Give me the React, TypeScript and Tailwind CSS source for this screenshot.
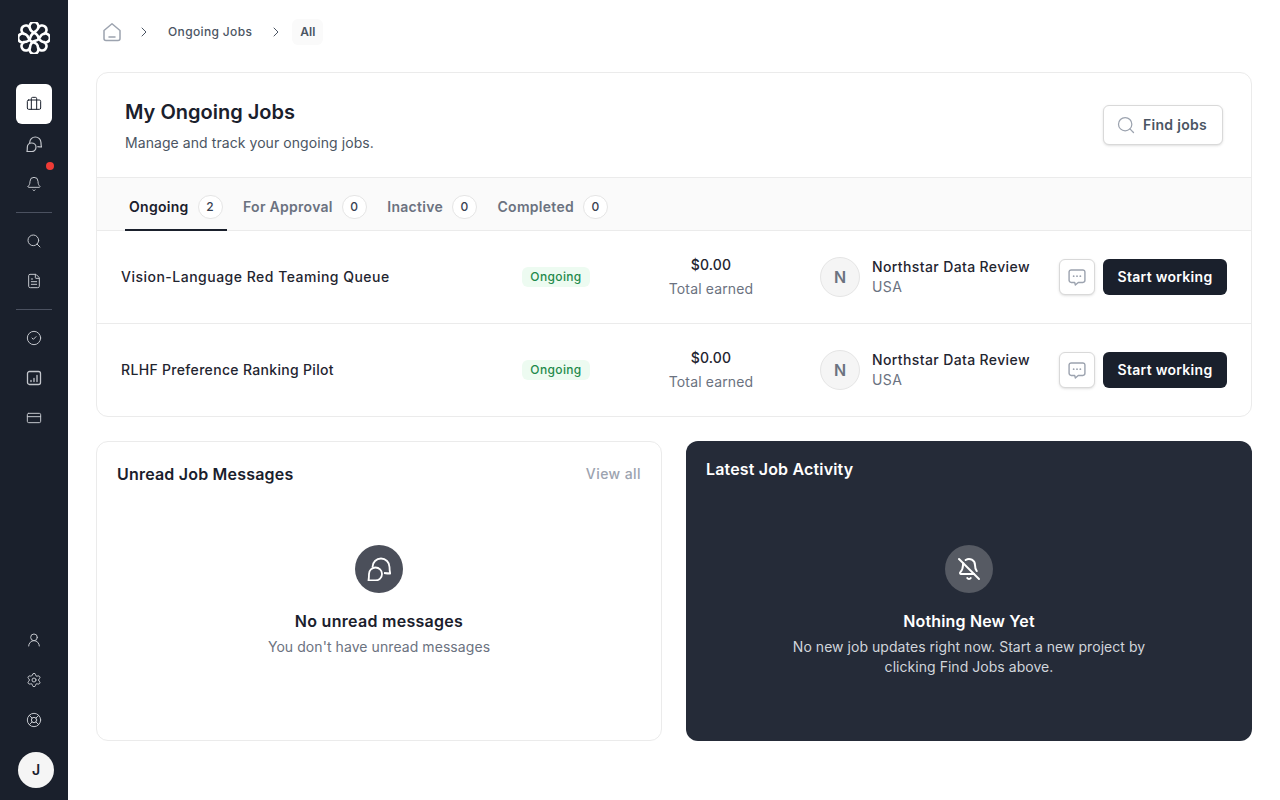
import {
  Bell,
  BellOff,
  Briefcase,
  ChevronRight,
  CircleCheck,
  CreditCard,
  FileText,
  LifeBuoy,
  Search,
  Settings,
  UserRound,
} from "lucide-react";

const tabs = [
  { label: "Ongoing", count: 2, active: true },
  { label: "For Approval", count: 0 },
  { label: "Inactive", count: 0 },
  { label: "Completed", count: 0 },
];

function Logo() {
  return (
    <svg width="32" height="32" viewBox="0 0 32 32" fill="none" stroke="white" strokeWidth="2.6" strokeLinecap="round">
      <path d="M20 6.300A4.400 4.400 0 1 1 25.700 12A4.400 4.400 0 1 1 25.700 20A4.400 4.400 0 1 1 20 25.700A4.400 4.400 0 1 1 12 25.700A4.400 4.400 0 1 1 6.300 20A4.400 4.400 0 1 1 6.300 12A4.400 4.400 0 1 1 12 6.300A4.400 4.400 0 1 1 20 6.300Z" />
      <path d="M12 6.300C12 11 19 10 20 14.500C21 19 25 20 25.700 20" />
      <path d="M6.300 12C11 12 10 19 14.500 20C19 21 20 24 20 25.700" />
      <path d="M20 6.300C20 9 13 11 12.500 15C12 18 9 20 6.300 20" />
      <path d="M25.700 12C22 12 22 18 18 18.500C14 19 12 23 12 25.700" />
    </svg>
  );
}

function ChatBubbles({ size = 16, className = "" }: { size?: number; className?: string }) {
  return (
    <svg width={size} height={size} viewBox="0 0 24 24" fill="none" stroke="currentColor" strokeWidth="1.8" strokeLinejoin="round" className={className}>
      <path d="M5.500 10.500V10A8.500 8.500 0 0 1 14 1.500a8.500 8.500 0 0 1 8.500 8.500c0 2.400.2 4.500.8 6.500c-2 0-4-.2-6.300-.5" />
      <path d="M8.500 10.500a6.500 6.500 0 1 1 0 13H1.500c.4-2.200.5-4.400.5-6.500a6.500 6.500 0 0 1 6.500-6.500z" />
    </svg>
  );
}

function ChatDots() {
  return (
    <svg width="20" height="20" viewBox="0 0 24 24" fill="none" stroke="#9ca3af" strokeWidth="1.7" strokeLinejoin="round" strokeLinecap="round">
      <path d="M5 3.500h14a2.500 2.500 0 0 1 2.500 2.500v10a2.500 2.500 0 0 1-2.500 2.500h-5.500L10 21.500l-.8-3H5A2.500 2.500 0 0 1 2.500 16V6A2.500 2.500 0 0 1 5 3.500z" />
      <path d="M8 11h.01M12 11h.01M16 11h.01" strokeWidth="2.200" />
    </svg>
  );
}

function ChartSquare() {
  return (
    <svg width="16" height="16" viewBox="0 0 16 16" fill="none" stroke="currentColor" strokeWidth="1.3" strokeLinecap="round">
      <rect x="1.500" y="1.500" width="13" height="13" rx="2" />
      <path d="M5 11.500v-1M8 11.500v-3M11 11.500v-6" />
    </svg>
  );
}

function HomeIcon() {
  return (
    <svg width="20" height="20" viewBox="0 0 20 20" fill="none" stroke="#9ca3af" strokeWidth="1.5" strokeLinejoin="round" strokeLinecap="round">
      <path d="M2 8.500 10 1.800l8 6.700v8a2 2 0 0 1-2 2H4a2 2 0 0 1-2-2z" />
      <path d="M7 15h6" />
    </svg>
  );
}

function NavItem({ children }: { children: React.ReactNode }) {
  return <div className="flex h-10 w-9 items-center justify-center text-[#c3c6cc]">{children}</div>;
}

function Sidebar() {
  return (
    <aside className="flex h-[800px] w-[68px] shrink-0 flex-col items-center bg-[#1a202c]">
      <div className="mt-[22px]">
        <Logo />
      </div>
      <div className="mt-[30px] flex h-10 w-9 items-center justify-center rounded-md bg-white text-[#1a202c]">
        <Briefcase size={16} strokeWidth={1.5} />
      </div>
      <NavItem>
        <ChatBubbles />
      </NavItem>
      <div className="relative">
        <NavItem>
          <Bell size={16} strokeWidth={1.5} />
        </NavItem>
        <span className="absolute right-[-2px] top-[-2px] h-2 w-2 rounded-full bg-[#ef3b36]" />
      </div>
      <div className="mb-2 mt-2 h-px w-9 bg-[#4b5160]" />
      <NavItem>
        <Search size={16} strokeWidth={1.5} />
      </NavItem>
      <NavItem>
        <FileText size={16} strokeWidth={1.5} />
      </NavItem>
      <div className="mb-2 mt-2 h-px w-9 bg-[#4b5160]" />
      <NavItem>
        <CircleCheck size={16} strokeWidth={1.5} />
      </NavItem>
      <NavItem>
        <ChartSquare />
      </NavItem>
      <NavItem>
        <CreditCard size={16} strokeWidth={1.5} />
      </NavItem>
      <div className="flex-1" />
      <NavItem>
        <UserRound size={16} strokeWidth={1.5} />
      </NavItem>
      <NavItem>
        <Settings size={16} strokeWidth={1.5} />
      </NavItem>
      <NavItem>
        <LifeBuoy size={16} strokeWidth={1.5} />
      </NavItem>
      <div className="mb-3 ml-1 mt-3 flex h-9 w-9 items-center justify-center rounded-full bg-[#f5f5f5] text-sm font-semibold text-[#1a202c]">
        J
      </div>
    </aside>
  );
}

function JobRow({ title, titleClass, last }: { title: string; titleClass: string; last?: boolean }) {
  return (
    <div className={`flex items-center pl-6 pr-6 ${last ? "h-[92px]" : "h-[93px] border-b border-[#ebebeb]"}`}>
      <div className={`w-[401px] text-sm font-medium text-[#1f2530] ${titleClass}`}>{title}</div>
      <div className="w-[68px]">
        <span className="flex h-5 w-[68px] items-center justify-center rounded-md bg-[#edfbf1] text-xs font-medium tracking-[0.03em] text-[#1f8a4c]">
          Ongoing
        </span>
      </div>
      <div className="ml-[61px] w-[120px] text-center text-sm tracking-[0.01em]">
        <div className="font-medium leading-5 text-[#1f2530]">$0.00</div>
        <div className="mt-1 leading-5 text-[#6b7280]">Total earned</div>
      </div>
      <div className="ml-[49px] flex h-10 w-10 items-center justify-center rounded-full border border-[#e5e5e5] bg-[#f5f5f5] font-semibold text-[#6b7280]">
        N
      </div>
      <div className="ml-3 w-[187px] text-sm tracking-[0.027em]">
        <div className="font-medium leading-5 text-[#1f2530]">Northstar Data Review</div>
        <div className="leading-5 text-[#6b7280]">USA</div>
      </div>
      <button className="flex h-9 w-9 items-center justify-center rounded-md border border-[#d9d9d9] bg-white shadow-sm">
        <ChatDots />
      </button>
      <button className="ml-2 h-9 w-[124px] rounded-md bg-[#1a202c] text-sm font-semibold tracking-[0.02em] text-white">
        Start working
      </button>
    </div>
  );
}

export default function App() {
  return (
    <div className="flex h-[800px] overflow-hidden bg-white font-['Inter',sans-serif]">
      <Sidebar />
      <main className="flex-1 px-7">
        <nav className="flex h-[72px] items-center pb-[8px] pl-[6px] text-xs text-[#4b5563]">
          <HomeIcon />
          <ChevronRight size={16} strokeWidth={1.5} className="ml-[14px] text-[#4b5563]" />
          <span className="ml-[16px] font-medium tracking-[0.03em]">Ongoing Jobs</span>
          <ChevronRight size={16} strokeWidth={1.5} className="ml-[16px] text-[#4b5563]" />
          <span className="ml-[8px] flex h-[26px] items-center rounded-md bg-[#fafafa] px-2 font-semibold">All</span>
        </nav>

        <section className="overflow-hidden rounded-xl border border-[#ebebeb]">
          <div className="flex h-[104px] items-center justify-between pl-7 pr-7">
            <div className="pt-px">
              <h1 className="text-xl font-semibold leading-7 text-[#1a202c]">My Ongoing Jobs</h1>
              <p className="mt-[7px] text-sm leading-5 tracking-[0.005em] text-[#4b5563]">Manage and track your ongoing jobs.</p>
            </div>
            <button className="flex h-10 w-[120px] items-center justify-center gap-[7px] rounded-md border border-[#d9d9d9] bg-white pr-[3px] text-sm font-semibold tracking-[0.02em] text-[#4b5563] shadow-sm">
              <Search size={20} strokeWidth={1.5} className="text-[#9ca3af]" />
              Find jobs
            </button>
          </div>
          <div className="flex h-[54px] items-stretch gap-[12.5px] border-y border-[#ebebeb] bg-[#fafafa] pl-7 pt-[6px]">
            {tabs.map((t) => (
              <div
                key={t.label}
                className={`flex items-center gap-[9px] px-1 text-sm font-semibold tracking-[0.02em] ${
                  t.active ? "-mb-px border-b-2 border-[#1a202c] text-[#1a202c]" : "text-[#6b7280]"
                }`}
              >
                {t.label}
                <span className="flex h-6 w-[25px] items-center justify-center rounded-full border border-[#e5e5e5] bg-white text-xs font-medium text-[#374151]">
                  {t.count}
                </span>
              </div>
            ))}
          </div>
          <JobRow title="Vision-Language Red Teaming Queue" titleClass="tracking-[0.035em]" />
          <JobRow title="RLHF Preference Ranking Pilot" titleClass="tracking-[0.023em]" last />
        </section>

        <div className="mt-6 grid grid-cols-2 gap-6">
          <section className="h-[300px] rounded-xl border border-[#ebebeb] bg-white px-5">
            <div className="flex items-center justify-between pt-[22px]">
              <h2 className="text-base font-semibold leading-5 tracking-[0.0125em] text-[#1a202c]">Unread Job Messages</h2>
              <span className="text-sm font-medium tracking-[0.03em] text-[#9ca3af]">View all</span>
            </div>
            <div className="mt-[61px] flex flex-col items-center">
              <div className="flex h-12 w-12 items-center justify-center rounded-full bg-[#4b4f5a] text-white">
                <ChatBubbles size={24} />
              </div>
              <div className="mt-4 text-base font-semibold leading-6 tracking-[0.0175em] text-[#1a202c]">No unread messages</div>
              <div className="mt-1 text-sm leading-5 tracking-[0.005em] text-[#6b7280]">You don't have unread messages</div>
            </div>
          </section>
          <section className="h-[300px] rounded-xl bg-[#252b38] px-5">
            <h2 className="pt-[18px] text-base font-semibold leading-5 tracking-[0.01em] text-white">Latest Job Activity</h2>
            <div className="mt-[66px] flex flex-col items-center">
              <div className="flex h-12 w-12 items-center justify-center rounded-full bg-[#565a63] text-white">
                <BellOff size={24} strokeWidth={2} />
              </div>
              <div className="mt-4 text-base font-semibold leading-6 tracking-[0.01em] text-white">Nothing New Yet</div>
              <p className="mt-1 w-[380px] text-center text-sm leading-5 tracking-[0.003em] text-[#d1d5db]">
                No new job updates right now. Start a new project by clicking Find Jobs above.
              </p>
            </div>
          </section>
        </div>
      </main>
    </div>
  );
}
